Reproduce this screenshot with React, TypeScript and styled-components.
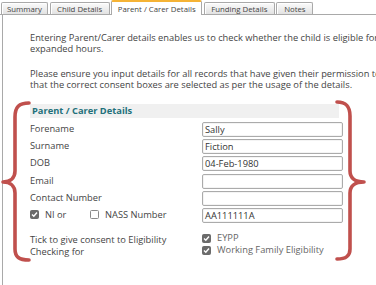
import styled, { createGlobalStyle } from "styled-components";

const GlobalStyle = createGlobalStyle`
  html, body {
    margin: 0;
    padding: 0;
    background: #fff;
    overflow: hidden;
  }
  body {
    font-family: "Open Sans", "Noto Sans", sans-serif;
    color: #444;
  }
`;

const Page = styled.div`
  position: relative;
  width: 376px;
  height: 285px;
  overflow: hidden;
`;

const TabBar = styled.div`
  display: flex;
  align-items: flex-end;
  gap: 1.6px;
  height: 14px;
  padding-left: 1px;
  border-bottom: 1px solid #a9a9a9;
`;

const Tab = styled.div<{ $w: number; $active?: boolean }>`
  box-sizing: border-box;
  width: ${({ $w }) => $w}px;
  height: ${({ $active }) => ($active ? "15px" : "12px")};
  margin-bottom: ${({ $active }) => ($active ? "-1px" : "0")};
  display: flex;
  align-items: center;
  justify-content: center;
  font-size: 7.8px;
  color: #444;
  white-space: nowrap;
  border: 1px solid #a9a9a9;
  border-bottom: none;
  border-top: ${({ $active }) =>
    $active ? "2px solid #f5b335" : "1px solid #a9a9a9"};
  border-radius: 2px 2px 0 0;
  background: ${({ $active }) =>
    $active ? "#fff" : "linear-gradient(#fbfbfb, #e2e2e2)"};
  box-shadow: ${({ $active }) =>
    $active ? "none" : "inset 1px 1px 0 #fff"};
`;

const Panel = styled.div`
  margin-left: 2px;
  border-left: 1px solid #a9a9a9;
  height: 270px;
  padding: 17px 0 0 27px;
  box-sizing: border-box;
`;

const Para = styled.p`
  margin: 0 0 14px;
  font-size: 9.3px;
  line-height: 11px;
  color: #444;
  white-space: nowrap;
`;

const Fieldset = styled.div`
  margin-top: 11px;
`;

const Legend = styled.div`
  width: 309px;
  height: 14.3px;
  line-height: 14.3px;
  padding-left: 2px;
  box-sizing: border-box;
  background: #f0f0f0;
  color: #23707b;
  font-weight: 700;
  font-size: 9.3px;
`;

const FormGrid = styled.div`
  display: grid;
  grid-template-columns: 172px 141px;
  grid-auto-rows: 15px;
  row-gap: 2.33px;
  margin-top: 3.3px;
`;

const Label = styled.div`
  font-size: 9.3px;
  line-height: 13px;
  color: #444;
  white-space: nowrap;
`;

const Input = styled.div`
  box-sizing: border-box;
  height: 15px;
  border: 1px solid #ababab;
  border-radius: 2px;
  padding-left: 2px;
  font-size: 9.3px;
  line-height: 13px;
  color: #333;
  white-space: nowrap;
  box-shadow: inset 0 0 0 1px #f4f4f4;
`;

const CheckRow = styled.div`
  display: flex;
  align-items: center;
  height: 13px;
  font-size: 9.3px;
  color: #444;
  white-space: nowrap;
`;

const CheckGroup = styled.div<{ $w?: number }>`
  display: flex;
  align-items: center;
  gap: 6px;
  width: ${({ $w }) => ($w ? `${$w}px` : "auto")};
`;

const Box = styled.span<{ $checked?: boolean }>`
  box-sizing: border-box;
  width: 9px;
  height: 9px;
  border-radius: 1.5px;
  display: inline-flex;
  align-items: center;
  justify-content: center;
  flex: none;
  background: ${({ $checked }) => ($checked ? "#6b6b6b" : "#fff")};
  border: 1px solid ${({ $checked }) => ($checked ? "#6b6b6b" : "#8a8a8a")};
`;

const Consent = styled.div`
  display: grid;
  grid-template-columns: 172px 141px;
  margin-top: 10.5px;
  font-size: 9.3px;
  line-height: 12px;
`;

const ConsentText = styled.div`
  color: #444;
  white-space: nowrap;
`;

const ConsentList = styled.div`
  display: flex;
  flex-direction: column;
  margin-top: -1.5px;
`;

const ConsentItem = styled.div`
  display: flex;
  align-items: center;
  gap: 6px;
  height: 12px;
  color: #666;
  white-space: nowrap;
`;

const Overlay = styled.svg`
  position: absolute;
  left: 0;
  top: 0;
  pointer-events: none;
`;

const Check = ({ checked }: { checked?: boolean }) => (
  <Box $checked={checked}>
    {checked && (
      <svg width="7" height="7" viewBox="0 0 7 7">
        <path
          d="M1 3.6 L2.8 5.3 L6 1.5"
          fill="none"
          stroke="#fff"
          strokeWidth="1.4"
        />
      </svg>
    )}
  </Box>
);

const tabs = [
  { name: "Summary", w: 47 },
  { name: "Child Details", w: 60 },
  { name: "Parent / Carer Details", w: 91, active: true },
  { name: "Funding Details", w: 71 },
  { name: "Notes", w: 37 },
];

const fields = [
  { label: "Forename", value: "Sally" },
  { label: "Surname", value: "Fiction" },
  { label: "DOB", value: "04-Feb-1980" },
  { label: "Email", value: "" },
  { label: "Contact Number", value: "" },
];

export default function App() {
  return (
    <Page>
      <GlobalStyle />
      <TabBar>
        {tabs.map((t) => (
          <Tab key={t.name} $w={t.w} $active={t.active}>
            {t.name}
          </Tab>
        ))}
      </TabBar>
      <Panel>
        <Para>
          Entering Parent/Carer details enables us to check whether the child is
          eligible for
          <br />
          expanded hours.
        </Para>
        <Para>
          Please ensure you input details for all records that have given their
          permission to
          <br />
          that the correct consent boxes are selected as per the usage of the
          details.
        </Para>
        <Fieldset>
          <Legend>Parent / Carer Details</Legend>
          <FormGrid>
            {fields.map((f) => [
              <Label key={f.label}>{f.label}</Label>,
              <Input key={f.label + "-in"}>{f.value}</Input>,
            ])}
            <CheckRow>
              <CheckGroup $w={60}>
                <Check checked />
                NI or
              </CheckGroup>
              <CheckGroup>
                <Check />
                NASS Number
              </CheckGroup>
            </CheckRow>
            <Input>AA111111A</Input>
          </FormGrid>
          <Consent>
            <ConsentText>
              Tick to give consent to Eligibility
              <br />
              Checking for
            </ConsentText>
            <ConsentList>
              <ConsentItem>
                <Check checked />
                EYPP
              </ConsentItem>
              <ConsentItem>
                <Check checked />
                Working Family Eligibility
              </ConsentItem>
            </ConsentList>
          </Consent>
        </Fieldset>
      </Panel>
      <Overlay width="376" height="285" viewBox="0 0 376 285">
        <g
          fill="none"
          stroke="#c0504d"
          strokeWidth="3.6"
          strokeLinecap="round"
          strokeLinejoin="round"
        >
          <path d="M29 103 C19 103 15 107 15 117 L15 171 C15 178 10 182 3 182 C10 182 15 186 15 193 L15 249 C15 257 19 260 29 260" />
          <path d="M337 102 C346 102 350 106 350 116 L350 171 C350 178 355 182 364 182 C355 182 350 186 350 193 L350 249 C350 256 346 259 337 259" />
        </g>
      </Overlay>
    </Page>
  );
}
